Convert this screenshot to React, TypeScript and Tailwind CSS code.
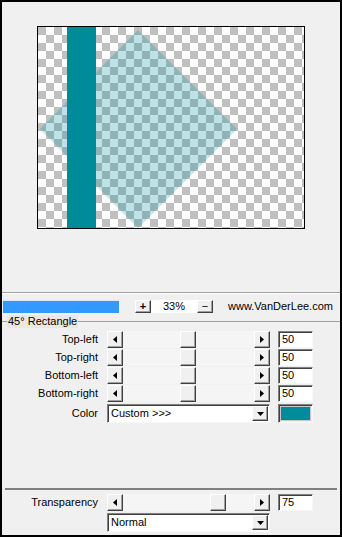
import React from 'react';

const raised =
  'border border-t-white border-l-white border-r-[#404040] border-b-[#404040] shadow-[inset_-1px_-1px_0_#a0a0a0] bg-[#f0f0f0]';
const sunken =
  'border border-t-[#808080] border-l-[#808080] border-r-[#f8f8f8] border-b-[#f8f8f8] shadow-[inset_1px_1px_0_#404040]';

function Arrow({ dir }: { dir: 'left' | 'right' | 'down' }) {
  if (dir === 'down') {
    return (
      <svg width="7" height="4" viewBox="0 0 7 4">
        <polygon points="0,0 7,0 3.5,4" fill="#000" />
      </svg>
    );
  }
  return (
    <svg width="4" height="7" viewBox="0 0 4 7">
      {dir === 'left' ? (
        <polygon points="4,0 4,7 0,3.5" fill="#000" />
      ) : (
        <polygon points="0,0 0,7 4,3.5" fill="#000" />
      )}
    </svg>
  );
}

function ScrollBar({ offset }: { offset: number }) {
  return (
    <div className="flex w-[163px] h-[17px]">
      <div className={`w-[16px] h-full flex items-center justify-center ${raised}`}>
        <Arrow dir="left" />
      </div>
      <div className="flex-1 h-full bg-[#f5f5f5] flex">
        {/* thumb position is the slider value */}
        <div style={{ marginLeft: offset }} className={`w-[16px] h-full ${raised}`} />
      </div>
      <div className={`w-[16px] h-full flex items-center justify-center ${raised}`}>
        <Arrow dir="right" />
      </div>
    </div>
  );
}

function NumBox({ value }: { value: string }) {
  return (
    <div className={`w-[35px] h-[17px] bg-white pl-[3px] leading-[15px] ${sunken}`}>{value}</div>
  );
}

function Dropdown({ value }: { value: string }) {
  return (
    <div className={`w-[163px] h-[19px] bg-white flex items-center pl-[3px] ${sunken}`}>
      <span className="flex-1">{value}</span>
      <div className={`w-[16px] h-[15px] mr-[1px] flex items-center justify-center ${raised}`}>
        <Arrow dir="down" />
      </div>
    </div>
  );
}

function SliderRow({ label, value, offset }: { label: string; value: string; offset: number }) {
  return (
    <div className="flex items-center h-[17px]">
      <div className="w-[96px] text-right">{label}</div>
      <div className="ml-[9px]">
        <ScrollBar offset={offset} />
      </div>
      <div className="ml-[8px]">
        <NumBox value={value} />
      </div>
    </div>
  );
}

export default function App() {
  return (
    <div className="w-[342px] h-[537px] border-2 border-black bg-[#f0f0f0] flex flex-col text-[11px] text-black font-['Liberation_Sans',Arial,sans-serif]">
      {/* Preview */}
      <div className="pt-[24px] pl-[35px]">
        <div className="w-[268px] h-[203px] border border-black bg-[image:conic-gradient(#fff_25%,#c0c0c0_0_50%,#fff_0_75%,#c0c0c0_0)] bg-[length:16px_16px]">
          <svg width="266" height="201" viewBox="0 0 266 201">
            <polygon points="2,102 100,3 199,102 100,201" fill="#008b9b" fillOpacity="0.25" />
            <rect x="29" y="0" width="29" height="201" fill="#008b9b" />
          </svg>
        </div>
      </div>

      <div className="mt-[63px] h-px bg-[#a0a0a0]" />
      <div className="h-px bg-white" />

      {/* Zoom toolbar */}
      <div className="mt-[6px] flex items-center h-[13px] pl-[1px]">
        <div className="w-[116px] h-[13px] bg-[#3399ff] border-t border-[#d8e8f8]" />
        <div className={`ml-[16px] w-[16px] h-[13px] flex items-center justify-center font-bold leading-none ${raised}`}>
          +
        </div>
        <div className="w-[46px] h-[13px] bg-white flex items-center justify-center">33%</div>
        <div className={`w-[16px] h-[13px] flex items-center justify-center leading-none ${raised}`}>
          −
        </div>
        <div className="ml-[15px]">www.VanDerLee.com</div>
      </div>

      {/* Group title */}
      <div className="mt-[2px] flex items-center h-[13px]">
        <div className="w-[5px] h-px bg-[#a0a0a0]" />
        <div className="px-[1px] bg-[#ebe8df] leading-[13px]">45° Rectangle</div>
        <div className="flex-1 h-px bg-[#a0a0a0]" />
      </div>

      <div className="mt-[3px] flex flex-col gap-px">
        <SliderRow label="Top-left" value="50" offset={57} />
        <SliderRow label="Top-right" value="50" offset={57} />
        <SliderRow label="Bottom-left" value="50" offset={57} />
        <SliderRow label="Bottom-right" value="50" offset={57} />
      </div>

      <div className="mt-[2px] flex items-center h-[19px]">
        <div className="w-[96px] text-right">Color</div>
        <div className="ml-[9px]">
          <Dropdown value="Custom >>>" />
        </div>
        <div className={`ml-[8px] w-[35px] h-[19px] p-px ${sunken}`}>
          <div className="w-full h-full bg-[#008b9b] border border-[#c8c8c8]" />
        </div>
      </div>

      <div className="mt-[65px] mx-[3px] h-[2px] bg-[#808080]" />

      <div className="mt-[4px]">
        <SliderRow label="Transparency" value="75" offset={87} />
      </div>
      <div className="mt-[2px] ml-[105px]">
        <Dropdown value="Normal" />
      </div>
    </div>
  );
}
